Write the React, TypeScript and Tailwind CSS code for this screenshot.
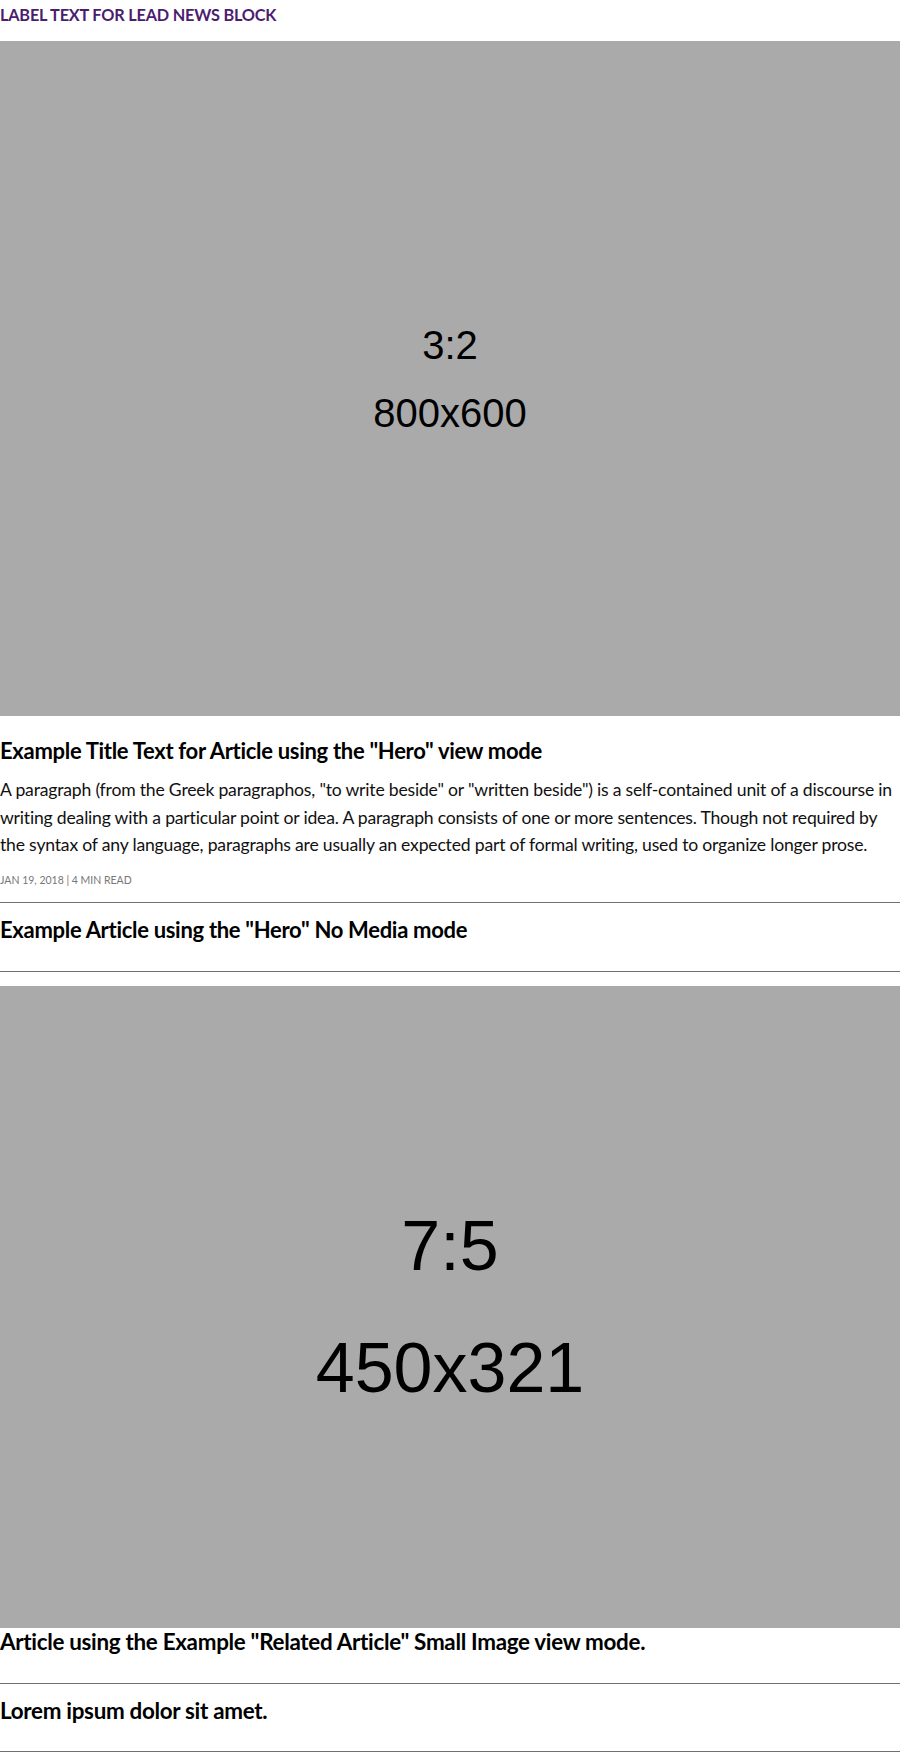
const font = "font-['Lato','Noto_Sans',sans-serif]";

const Placeholder = ({
  ratio,
  size,
  height,
  text,
  lead,
}: {
  ratio: string;
  size: string;
  height: string;
  text: string;
  lead: string;
}) => (
  <div
    className={`flex ${height} w-full flex-col items-center justify-center bg-[#aaaaaa] font-['Liberation_Sans',Arial,sans-serif] text-black ${size} ${lead}`}
  >
    <span>{ratio}</span>
    <span>{text}</span>
  </div>
);

export default function App() {
  return (
    <div className={`w-[900px] bg-white ${font}`}>
      <div className="flex h-[41px] items-start pt-[4px] text-[16.3px] font-bold leading-[22px] tracking-[-0.2px] text-[#4b1d6f]">
        LABEL TEXT FOR LEAD NEWS BLOCK
      </div>

      <Placeholder
        ratio="3:2"
        text="800x600"
        height="h-[675px]"
        size="text-[40px]"
        lead="leading-[68px]"
      />

      <article className="pt-[20px]">
        <h2 className="text-[22px] font-bold leading-[30px] tracking-[-0.3px] text-black">
          Example Title Text for Article using the "Hero" view mode
        </h2>
        <p className="mt-[10px] text-[17.6px] leading-[27.5px] tracking-[-0.2px] text-[#111]">
          A paragraph (from the Greek paragraphos, "to write beside" or "written
          beside") is a self-contained unit of a discourse in writing dealing
          with a particular point or idea. A paragraph consists of one or more
          sentences. Though not required by the syntax of any language,
          paragraphs are usually an expected part of formal writing, used to
          organize longer prose.
        </p>
        <div className="mt-[13px] text-[10.5px] uppercase leading-[16px] text-[#777]">
          Jan 19, 2018 | 4 min read
        </div>
      </article>

      <div className="mt-[14px] border-t border-[#707070]" />

      <div className="flex h-[68px] items-start pt-[12px]">
        <h3 className="text-[22px] font-bold leading-[30px] tracking-[-0.3px] text-black">
          Example Article using the "Hero" No Media mode
        </h3>
      </div>

      <div className="border-t border-[#707070]" />

      <div className="pt-[14px]">
        <Placeholder
          ratio="7:5"
          text="450x321"
          height="h-[642px]"
          size="text-[70px]"
          lead="leading-[122px]"
        />
      </div>

      <div className="flex h-[55px] items-start">
        <h3 className="text-[22.4px] font-bold leading-[28px] tracking-[-0.3px] text-black">
          Article using the Example "Related Article" Small Image view mode.
        </h3>
      </div>

      <div className="border-t border-[#707070]" />

      <div className="flex h-[67px] items-start pt-[12px]">
        <h3 className="text-[22.4px] font-bold leading-[30px] tracking-[-0.3px] text-black">
          Lorem ipsum dolor sit amet.
        </h3>
      </div>

      <div className="border-t border-[#707070]" />
    </div>
  );
}
